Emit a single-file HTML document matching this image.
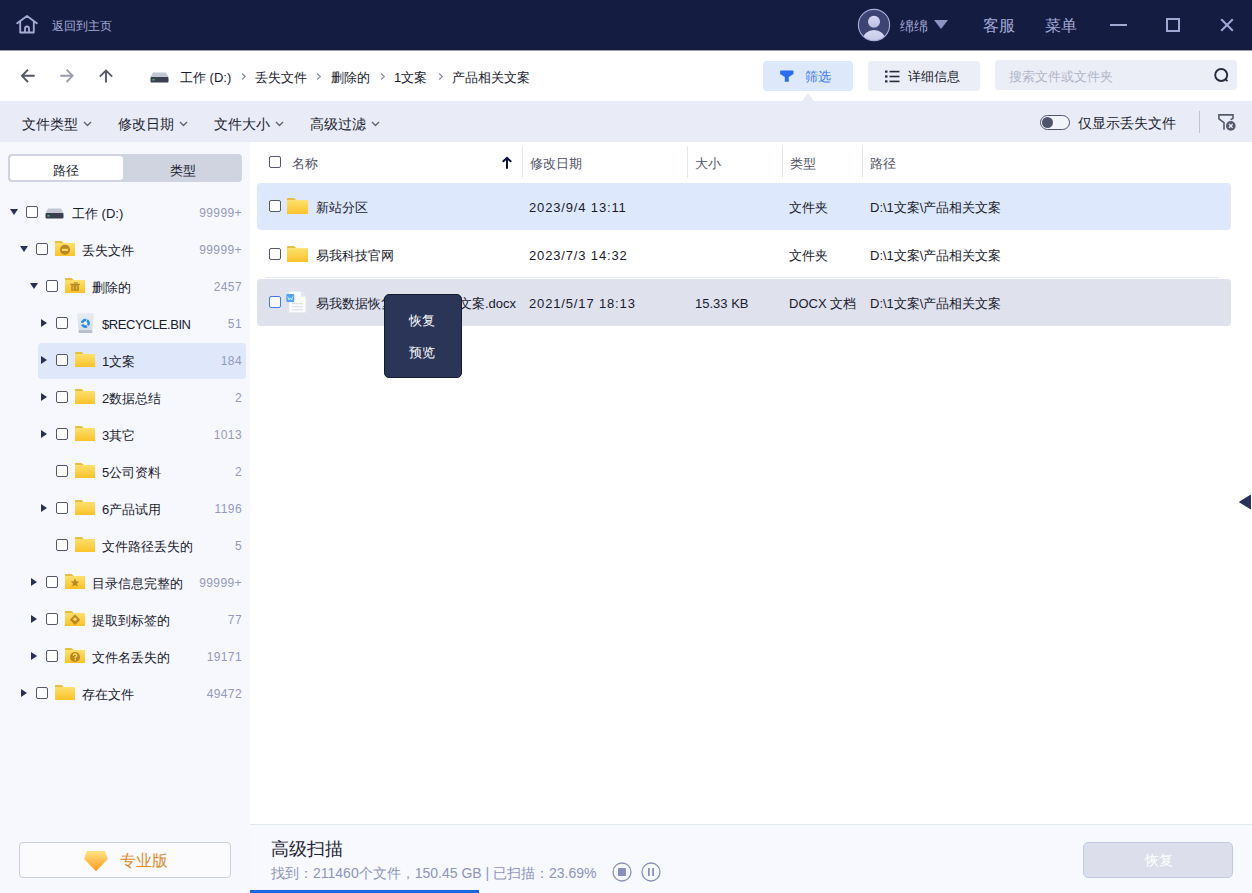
<!DOCTYPE html>
<html><head><meta charset="utf-8">
<style>
*{margin:0;padding:0;box-sizing:border-box}
html,body{width:1252px;height:893px;overflow:hidden;background:#fff;font-family:"Liberation Sans",sans-serif;color:#191b2e}
.a{position:absolute}
.t{position:absolute;white-space:nowrap;line-height:1;margin-top:2px}
#hdr{left:0;top:0;width:1252px;height:50px;background:#151c42}
#tb{left:0;top:50px;width:1252px;height:51px;background:#fff}
#fb{left:0;top:101px;width:1252px;height:41px;background:#e9ecf6}
#sb{left:0;top:142px;width:250px;height:751px;background:#f7f8fd}
#main{left:250px;top:142px;width:1002px;height:682px;background:#fff}
#status{left:250px;top:824px;width:1002px;height:69px;background:#f7f9fe;border-top:1px solid #e3eaee}
.cb{position:absolute;width:12px;height:12px;border:1.3px solid #55596a;border-radius:2px;background:#fff}
.tri{position:absolute;width:0;height:0;border-left:4.5px solid transparent;border-right:4.5px solid transparent;border-top:6px solid #283057}
.trir{position:absolute;width:0;height:0;border-top:4.5px solid transparent;border-bottom:4.5px solid transparent;border-left:6px solid #283057}
.cnt{position:absolute;right:8px;font-size:12px;color:#9499bd;line-height:1;white-space:nowrap;letter-spacing:0.4px;margin-top:1px}
.tx{position:absolute;font-size:13px;color:#191b2e;line-height:1;white-space:nowrap;margin-top:2px}
.ln{letter-spacing:0.85px}
</style></head><body>

<!-- HEADER -->
<div id="hdr" class="a">
  <svg class="a" style="left:16px;top:15px" width="22" height="19" viewBox="0 0 22 19"><path d="M1.2 8.3 L11 1 L20.8 8.3 M4.2 6.5 V17.5 H17.8 V6.5 M9 17.5 V13.5 A2 2 0 0 1 13 13.5 V17.5" fill="none" stroke="#a7acd6" stroke-width="1.8" stroke-linejoin="round" stroke-linecap="round"/></svg>
  <div class="t" style="left:52px;top:18px;font-size:12px;color:#a7acd6">返回到主页</div>
  <svg class="a" style="left:857px;top:8px" width="34" height="34" viewBox="0 0 34 34"><defs><clipPath id="avc"><circle cx="17" cy="17" r="15.6"/></clipPath><linearGradient id="avg" x1="0" y1="0" x2="0" y2="1"><stop offset="0" stop-color="#d6d9f2"/><stop offset="1" stop-color="#b9bde3"/></linearGradient></defs><circle cx="17" cy="17" r="15.6" fill="#3e4471"/><g clip-path="url(#avc)"><circle cx="17" cy="13.8" r="6" fill="url(#avg)"/><ellipse cx="17" cy="31.5" rx="11" ry="9.5" fill="url(#avg)"/></g><circle cx="17" cy="17" r="15.6" fill="none" stroke="#a9aedc" stroke-width="1.1"/></svg>
  <div class="t" style="left:900px;top:17px;font-size:14px;color:#a7acd6">绵绵</div>
  <div class="a" style="left:934px;top:20px;width:0;height:0;border-left:7px solid transparent;border-right:7px solid transparent;border-top:9.5px solid #8e93c2"></div>
  <div class="t" style="left:983px;top:16px;font-size:16px;color:#a2a8d4">客服</div>
  <div class="t" style="left:1045px;top:16px;font-size:16px;color:#a2a8d4">菜单</div>
  <div class="a" style="left:1110px;top:24px;width:17px;height:2px;background:#a2a8d4"></div>
  <div class="a" style="left:1166px;top:18px;width:14px;height:14px;border:2px solid #a2a8d4"></div>
  <svg class="a" style="left:1219px;top:17px" width="16" height="16" viewBox="0 0 16 16"><path d="M2.2 2.2 L13.8 13.8 M13.8 2.2 L2.2 13.8" stroke="#a2a8d4" stroke-width="2"/></svg>
</div>

<div class="a" style="left:0;top:50px;width:1252px;height:1px;background:#9a9db0;z-index:2"></div>
<!-- TOOLBAR -->
<div id="tb" class="a">
  <svg class="a" style="left:20px;top:18px" width="16" height="16" viewBox="0 0 16 16"><path d="M14.7 7.8 H2 M8 1.6 L2 7.8 L8 14" fill="none" stroke="#545869" stroke-width="1.9"/></svg>
  <svg class="a" style="left:59px;top:18px" width="16" height="16" viewBox="0 0 16 16"><path d="M1.3 7.8 H13.6 M7.6 1.6 L13.6 7.8 L7.6 14" fill="none" stroke="#9a9cab" stroke-width="1.9"/></svg>
  <svg class="a" style="left:98px;top:19px" width="16" height="15" viewBox="0 0 16 15"><path d="M8 13.5 V2 M1.8 7.6 L8 1.6 L14.2 7.6" fill="none" stroke="#545869" stroke-width="1.9"/></svg>
  <svg class="a" style="left:150px;top:22px" width="19" height="11" viewBox="0 0 19 11"><path d="M3 0.5 H16 L18.5 5 H0.5Z" fill="#c3c7d3"/><rect x="0.5" y="5" width="18" height="5.5" rx="1" fill="#3b3f50"/><rect x="2.5" y="7" width="2" height="1.5" fill="#40c060"/></svg>
  <div class="tx" style="left:180px;top:19px;font-size:13px">工作 (D:)</div>
  <svg class="a" style="left:241px;top:22px" width="6" height="9" viewBox="0 0 6 9"><path d="M1.2 1.5 L4.3 4.5 L1.2 7.5" fill="none" stroke="#8f93a0" stroke-width="1.2"/></svg>
  <div class="tx" style="left:255px;top:19px;font-size:13px">丢失文件</div>
  <svg class="a" style="left:316px;top:22px" width="6" height="9" viewBox="0 0 6 9"><path d="M1.2 1.5 L4.3 4.5 L1.2 7.5" fill="none" stroke="#8f93a0" stroke-width="1.2"/></svg>
  <div class="tx" style="left:331px;top:19px;font-size:13px">删除的</div>
  <svg class="a" style="left:380px;top:22px" width="6" height="9" viewBox="0 0 6 9"><path d="M1.2 1.5 L4.3 4.5 L1.2 7.5" fill="none" stroke="#8f93a0" stroke-width="1.2"/></svg>
  <div class="tx" style="left:394px;top:19px;font-size:13px">1文案</div>
  <svg class="a" style="left:438px;top:22px" width="6" height="9" viewBox="0 0 6 9"><path d="M1.2 1.5 L4.3 4.5 L1.2 7.5" fill="none" stroke="#8f93a0" stroke-width="1.2"/></svg>
  <div class="tx" style="left:452px;top:19px;font-size:13px">产品相关文案</div>

  <div class="a" style="left:763px;top:11px;width:90px;height:30px;background:#dde8fb;border-radius:4px"></div>
  <div class="a" style="left:802px;top:43px;width:0;height:0;border-left:6.5px solid transparent;border-right:6.5px solid transparent;border-bottom:8px solid #e9ecf6"></div>
  <svg class="a" style="left:780px;top:20px" width="14" height="13" viewBox="0 0 14 13"><path d="M0.8 0.5 H12.8 Q13.5 0.5 13.5 1.2 V4 L8.8 7 V11.8 H4.8 V7 L0.1 4 V1.2 Q0.1 0.5 0.8 0.5Z" fill="#2a6cf0"/></svg>
  <div class="tx" style="left:805px;top:18px;font-size:13px;color:#3a78f0">筛选</div>

  <div class="a" style="left:868px;top:11px;width:112px;height:30px;background:#eceef7;border-radius:4px"></div>
  <svg class="a" style="left:885px;top:20px" width="15" height="13" viewBox="0 0 15 13"><rect x="0" y="0.5" width="2.5" height="2.2" fill="#262a3c"/><rect x="4.5" y="0.8" width="10" height="1.6" fill="#262a3c"/><rect x="0" y="5.4" width="2.5" height="2.2" fill="#262a3c"/><rect x="4.5" y="5.7" width="10" height="1.6" fill="#262a3c"/><rect x="0" y="10.3" width="2.5" height="2.2" fill="#262a3c"/><rect x="4.5" y="10.6" width="10" height="1.6" fill="#262a3c"/></svg>
  <div class="tx" style="left:908px;top:18px;font-size:13px">详细信息</div>

  <div class="a" style="left:995px;top:10px;width:242px;height:30px;background:#eceef7;border-radius:4px"></div>
  <div class="tx" style="left:1009px;top:18px;font-size:13px;color:#b1b5c9">搜索文件或文件夹</div>
  <svg class="a" style="left:1213px;top:17px" width="17" height="17" viewBox="0 0 17 17"><circle cx="8.2" cy="8" r="6" fill="none" stroke="#262a3c" stroke-width="1.9"/><path d="M12.4 12.2 L14.4 14.2" stroke="#262a3c" stroke-width="1.9"/></svg>
</div>

<!-- FILTER BAR -->
<div id="fb" class="a">
  <div class="tx" style="left:22px;top:14px;font-size:14px">文件类型</div>
  <svg class="a" style="left:83px;top:20px" width="9" height="6" viewBox="0 0 9 6"><path d="M1 1 L4.5 4.5 L8 1" fill="none" stroke="#5a5e70" stroke-width="1.3"/></svg>
  <div class="tx" style="left:118px;top:14px;font-size:14px">修改日期</div>
  <svg class="a" style="left:179px;top:20px" width="9" height="6" viewBox="0 0 9 6"><path d="M1 1 L4.5 4.5 L8 1" fill="none" stroke="#5a5e70" stroke-width="1.3"/></svg>
  <div class="tx" style="left:214px;top:14px;font-size:14px">文件大小</div>
  <svg class="a" style="left:275px;top:20px" width="9" height="6" viewBox="0 0 9 6"><path d="M1 1 L4.5 4.5 L8 1" fill="none" stroke="#5a5e70" stroke-width="1.3"/></svg>
  <div class="tx" style="left:310px;top:14px;font-size:14px">高级过滤</div>
  <svg class="a" style="left:371px;top:20px" width="9" height="6" viewBox="0 0 9 6"><path d="M1 1 L4.5 4.5 L8 1" fill="none" stroke="#5a5e70" stroke-width="1.3"/></svg>
  <div class="a" style="left:1040px;top:14px;width:30px;height:15px;border:1.3px solid #50546a;border-radius:8px;background:#f3f4fa"></div>
  <div class="a" style="left:1042px;top:16px;width:11px;height:11px;border-radius:50%;background:#50546a"></div>
  <div class="tx" style="left:1078px;top:12.5px;font-size:14px">仅显示丢失文件</div>
  <div class="a" style="left:1199px;top:10px;width:1px;height:22px;background:#bfc2cf"></div>
  <svg class="a" style="left:1210px;top:7px" width="32" height="28" viewBox="0 0 32 28"><path d="M14 21.8 V14.6 L8.9 10.8 V6.9 H23 V10.4 L20.6 11.8" fill="none" stroke="#55596b" stroke-width="1.6"/><circle cx="20.8" cy="17.9" r="5.4" fill="#e9ecf6"/><circle cx="20.8" cy="17.9" r="4.8" fill="#55596b"/><path d="M19 16.1 L22.6 19.7 M22.6 16.1 L19 19.7" stroke="#e9ecf6" stroke-width="1.4"/></svg>
</div>

<!-- SIDEBAR -->
<div id="sb" class="a">
  <div class="a" style="left:8px;top:12px;width:234px;height:28px;background:#d0d4e0;border-radius:4px"></div>
  <div class="a" style="left:10px;top:14px;width:113px;height:24px;background:#fff;border-radius:3px"></div>
  <div class="tx" style="left:53px;top:19.5px;font-size:13.3px">路径</div>
  <div class="tx" style="left:170px;top:19.5px;font-size:13.3px">类型</div>
  <div class="a" style="left:38px;top:201px;width:208px;height:36px;background:#dfe8fb;border-radius:4px"></div>
  <div class="tri" style="left:10px;top:67px"></div>
  <div class="cb" style="left:26px;top:64px"></div>
  <svg class="a" style="left:45px;top:66px" width="19" height="11" viewBox="0 0 19 11"><path d="M3 0.5 H16 L18.5 5 H0.5Z" fill="#c3c7d3"/><rect x="0.5" y="5" width="18" height="5.5" rx="1" fill="#3b3f50"/><rect x="2.5" y="7" width="2" height="1.5" fill="#40c060"/></svg>
  <div class="tx" style="left:72px;top:63px">工作 (D:)</div>
  <div class="cnt" style="top:64px">99999+</div>
  <div class="tri" style="left:20px;top:104px"></div>
  <div class="cb" style="left:36px;top:101px"></div>
  <svg class="a" style="left:55px;top:99px" width="20" height="15" viewBox="0 0 20 15" preserveAspectRatio="none"><defs><linearGradient id="fg1" x1="0" y1="0" x2="0" y2="1"><stop offset="0" stop-color="#fde06c"/><stop offset="1" stop-color="#fbc22a"/></linearGradient></defs><path d="M0 2.2 V0.8 Q0 0 0.8 0 H6.3 Q6.8 0 7.2 0.4 L9 2.2Z" fill="#e6bf3e"/><rect x="0" y="2" width="20" height="13" fill="url(#fg1)"/><circle cx="10" cy="8.8" r="5" fill="#b98724"/><rect x="7" y="7.8" width="6" height="2.1" fill="#fddc62"/></svg>
  <div class="tx" style="left:82px;top:100px">丢失文件</div>
  <div class="cnt" style="top:101px">99999+</div>
  <div class="tri" style="left:30px;top:141px"></div>
  <div class="cb" style="left:46px;top:138px"></div>
  <svg class="a" style="left:65px;top:136px" width="20" height="15" viewBox="0 0 20 15" preserveAspectRatio="none"><defs><linearGradient id="fg2" x1="0" y1="0" x2="0" y2="1"><stop offset="0" stop-color="#fde06c"/><stop offset="1" stop-color="#fbc22a"/></linearGradient></defs><path d="M0 2.2 V0.8 Q0 0 0.8 0 H6.3 Q6.8 0 7.2 0.4 L9 2.2Z" fill="#e6bf3e"/><rect x="0" y="2" width="20" height="13" fill="url(#fg2)"/><rect x="5.2" y="5.8" width="9.7" height="1.3" fill="#b98724"/><rect x="8.9" y="4.4" width="3.7" height="1.2" fill="#b98724"/><path d="M6.2 7.3 H13.9 V12.8 H6.2Z M7.8 8.6 V11.4 H8.9 V8.6Z M11.2 8.6 V11.4 H12.3 V8.6Z" fill="#b98724" fill-rule="evenodd"/></svg>
  <div class="tx" style="left:92px;top:137px">删除的</div>
  <div class="cnt" style="top:138px">2457</div>
  <div class="trir" style="left:41px;top:177px"></div>
  <div class="cb" style="left:56px;top:175px"></div>
  <svg class="a" style="left:77px;top:171px" width="17" height="20" viewBox="0 0 17 20"><defs><linearGradient id="rb" x1="0" y1="0" x2="0" y2="1"><stop offset="0" stop-color="#e8edf4"/><stop offset="1" stop-color="#d3d9e3"/></linearGradient></defs><path d="M0.2 1.6 Q0.2 0 1.8 0 H15.2 Q16.8 0 16.8 1.6 L15.1 20 H1.9Z" fill="url(#rb)"/><path d="M1.65 17.2 H15.35 L15.1 20 H1.9Z" fill="#b6bdc9"/><circle cx="8.4" cy="10.3" r="3.3" fill="none" stroke="#2b8aeb" stroke-width="2.5" stroke-dasharray="5.4 1.5" transform="rotate(-60 8.4 10.3)"/><path d="M8.4 8.3 L9.2 9.8 L10.4 10.3 L9.2 10.8 L8.4 12.3 L7.6 10.8 L6.4 10.3 L7.6 9.8Z" fill="#f3f6fb"/></svg>
  <div class="tx" style="left:102px;top:174px;letter-spacing:-0.45px">$RECYCLE.BIN</div>
  <div class="cnt" style="top:175px">51</div>
  <div class="trir" style="left:41px;top:214px"></div>
  <div class="cb" style="left:56px;top:212px"></div>
  <svg class="a" style="left:75px;top:210px" width="20" height="15" viewBox="0 0 20 15" preserveAspectRatio="none"><defs><linearGradient id="fg4" x1="0" y1="0" x2="0" y2="1"><stop offset="0" stop-color="#fde06c"/><stop offset="1" stop-color="#fbc22a"/></linearGradient></defs><path d="M0 2.2 V0.8 Q0 0 0.8 0 H6.3 Q6.8 0 7.2 0.4 L9 2.2Z" fill="#e6bf3e"/><rect x="0" y="2" width="20" height="13" fill="url(#fg4)"/></svg>
  <div class="tx" style="left:102px;top:211px">1文案</div>
  <div class="cnt" style="top:212px">184</div>
  <div class="trir" style="left:41px;top:251px"></div>
  <div class="cb" style="left:56px;top:249px"></div>
  <svg class="a" style="left:75px;top:247px" width="20" height="15" viewBox="0 0 20 15" preserveAspectRatio="none"><defs><linearGradient id="fg5" x1="0" y1="0" x2="0" y2="1"><stop offset="0" stop-color="#fde06c"/><stop offset="1" stop-color="#fbc22a"/></linearGradient></defs><path d="M0 2.2 V0.8 Q0 0 0.8 0 H6.3 Q6.8 0 7.2 0.4 L9 2.2Z" fill="#e6bf3e"/><rect x="0" y="2" width="20" height="13" fill="url(#fg5)"/></svg>
  <div class="tx" style="left:102px;top:248px">2数据总结</div>
  <div class="cnt" style="top:249px">2</div>
  <div class="trir" style="left:41px;top:288px"></div>
  <div class="cb" style="left:56px;top:286px"></div>
  <svg class="a" style="left:75px;top:284px" width="20" height="15" viewBox="0 0 20 15" preserveAspectRatio="none"><defs><linearGradient id="fg6" x1="0" y1="0" x2="0" y2="1"><stop offset="0" stop-color="#fde06c"/><stop offset="1" stop-color="#fbc22a"/></linearGradient></defs><path d="M0 2.2 V0.8 Q0 0 0.8 0 H6.3 Q6.8 0 7.2 0.4 L9 2.2Z" fill="#e6bf3e"/><rect x="0" y="2" width="20" height="13" fill="url(#fg6)"/></svg>
  <div class="tx" style="left:102px;top:285px">3其它</div>
  <div class="cnt" style="top:286px">1013</div>
  <div class="cb" style="left:56px;top:323px"></div>
  <svg class="a" style="left:75px;top:321px" width="20" height="15" viewBox="0 0 20 15" preserveAspectRatio="none"><defs><linearGradient id="fg7" x1="0" y1="0" x2="0" y2="1"><stop offset="0" stop-color="#fde06c"/><stop offset="1" stop-color="#fbc22a"/></linearGradient></defs><path d="M0 2.2 V0.8 Q0 0 0.8 0 H6.3 Q6.8 0 7.2 0.4 L9 2.2Z" fill="#e6bf3e"/><rect x="0" y="2" width="20" height="13" fill="url(#fg7)"/></svg>
  <div class="tx" style="left:102px;top:322px">5公司资料</div>
  <div class="cnt" style="top:323px">2</div>
  <div class="trir" style="left:41px;top:362px"></div>
  <div class="cb" style="left:56px;top:360px"></div>
  <svg class="a" style="left:75px;top:358px" width="20" height="15" viewBox="0 0 20 15" preserveAspectRatio="none"><defs><linearGradient id="fg8" x1="0" y1="0" x2="0" y2="1"><stop offset="0" stop-color="#fde06c"/><stop offset="1" stop-color="#fbc22a"/></linearGradient></defs><path d="M0 2.2 V0.8 Q0 0 0.8 0 H6.3 Q6.8 0 7.2 0.4 L9 2.2Z" fill="#e6bf3e"/><rect x="0" y="2" width="20" height="13" fill="url(#fg8)"/></svg>
  <div class="tx" style="left:102px;top:359px">6产品试用</div>
  <div class="cnt" style="top:360px">1196</div>
  <div class="cb" style="left:56px;top:397px"></div>
  <svg class="a" style="left:75px;top:395px" width="20" height="15" viewBox="0 0 20 15" preserveAspectRatio="none"><defs><linearGradient id="fg9" x1="0" y1="0" x2="0" y2="1"><stop offset="0" stop-color="#fde06c"/><stop offset="1" stop-color="#fbc22a"/></linearGradient></defs><path d="M0 2.2 V0.8 Q0 0 0.8 0 H6.3 Q6.8 0 7.2 0.4 L9 2.2Z" fill="#e6bf3e"/><rect x="0" y="2" width="20" height="13" fill="url(#fg9)"/></svg>
  <div class="tx" style="left:102px;top:396px">文件路径丢失的</div>
  <div class="cnt" style="top:397px">5</div>
  <div class="trir" style="left:31px;top:436px"></div>
  <div class="cb" style="left:46px;top:434px"></div>
  <svg class="a" style="left:65px;top:432px" width="20" height="15" viewBox="0 0 20 15" preserveAspectRatio="none"><defs><linearGradient id="fg10" x1="0" y1="0" x2="0" y2="1"><stop offset="0" stop-color="#fde06c"/><stop offset="1" stop-color="#fbc22a"/></linearGradient></defs><path d="M0 2.2 V0.8 Q0 0 0.8 0 H6.3 Q6.8 0 7.2 0.4 L9 2.2Z" fill="#e6bf3e"/><rect x="0" y="2" width="20" height="13" fill="url(#fg10)"/><path d="M10 4.3 L11.2 7.3 L14.3 7.5 L11.9 9.5 L12.7 12.6 L10 10.9 L7.3 12.6 L8.1 9.5 L5.7 7.5 L8.8 7.3Z" fill="#b98724"/></svg>
  <div class="tx" style="left:92px;top:433px">目录信息完整的</div>
  <div class="cnt" style="top:434px">99999+</div>
  <div class="trir" style="left:31px;top:473px"></div>
  <div class="cb" style="left:46px;top:471px"></div>
  <svg class="a" style="left:65px;top:469px" width="20" height="15" viewBox="0 0 20 15" preserveAspectRatio="none"><defs><linearGradient id="fg11" x1="0" y1="0" x2="0" y2="1"><stop offset="0" stop-color="#fde06c"/><stop offset="1" stop-color="#fbc22a"/></linearGradient></defs><path d="M0 2.2 V0.8 Q0 0 0.8 0 H6.3 Q6.8 0 7.2 0.4 L9 2.2Z" fill="#e6bf3e"/><rect x="0" y="2" width="20" height="13" fill="url(#fg11)"/><path d="M10 3.6 L15.2 8.8 L10 14 L4.8 8.8Z" fill="#b98724"/><circle cx="10" cy="8.2" r="1.7" fill="#fddc62"/></svg>
  <div class="tx" style="left:92px;top:470px">提取到标签的</div>
  <div class="cnt" style="top:471px">77</div>
  <div class="trir" style="left:31px;top:510px"></div>
  <div class="cb" style="left:46px;top:508px"></div>
  <svg class="a" style="left:65px;top:506px" width="20" height="15" viewBox="0 0 20 15" preserveAspectRatio="none"><defs><linearGradient id="fg12" x1="0" y1="0" x2="0" y2="1"><stop offset="0" stop-color="#fde06c"/><stop offset="1" stop-color="#fbc22a"/></linearGradient></defs><path d="M0 2.2 V0.8 Q0 0 0.8 0 H6.3 Q6.8 0 7.2 0.4 L9 2.2Z" fill="#e6bf3e"/><rect x="0" y="2" width="20" height="13" fill="url(#fg12)"/><circle cx="10" cy="9" r="5.1" fill="#b98724"/><path d="M8.3 7.8 Q8.3 6 10 6 Q11.8 6 11.8 7.6 Q11.8 8.6 10.3 9.2 V10.4" fill="none" stroke="#fddc62" stroke-width="1.3"/><circle cx="10.3" cy="11.9" r="0.8" fill="#fddc62"/></svg>
  <div class="tx" style="left:92px;top:507px">文件名丢失的</div>
  <div class="cnt" style="top:508px">19171</div>
  <div class="trir" style="left:21px;top:547px"></div>
  <div class="cb" style="left:36px;top:545px"></div>
  <svg class="a" style="left:55px;top:543px" width="20" height="15" viewBox="0 0 20 15" preserveAspectRatio="none"><defs><linearGradient id="fg13" x1="0" y1="0" x2="0" y2="1"><stop offset="0" stop-color="#fde06c"/><stop offset="1" stop-color="#fbc22a"/></linearGradient></defs><path d="M0 2.2 V0.8 Q0 0 0.8 0 H6.3 Q6.8 0 7.2 0.4 L9 2.2Z" fill="#e6bf3e"/><rect x="0" y="2" width="20" height="13" fill="url(#fg13)"/></svg>
  <div class="tx" style="left:82px;top:544px">存在文件</div>
  <div class="cnt" style="top:545px">49472</div>
  <div class="a" style="left:19px;top:700px;width:212px;height:36px;border:1px solid #cfd1d8;border-radius:4px;background:#fbfbfd"></div>
  <svg class="a" style="left:84px;top:709px" width="24" height="21" viewBox="0 0 24 21"><defs><linearGradient id="dia" x1="0" y1="0" x2="0" y2="1"><stop offset="0" stop-color="#ffe383"/><stop offset="1" stop-color="#ff981e"/></linearGradient></defs><path d="M2.7 0 H20.9 L23.9 8 L12 20.2 L0.1 8Z" fill="url(#dia)"/></svg>
  <div class="tx" style="left:120px;top:708.5px;font-size:16px;color:#de8a2e">专业版</div>
</div>

<!-- MAIN -->
<div id="main" class="a">
  <div class="cb" style="left:19px;top:14px"></div>
  <div class="tx" style="left:42px;top:13px;color:#4f5366">名称</div>
  <svg class="a" style="left:252px;top:14px" width="10" height="13" viewBox="0 0 10 13"><path d="M5 12 V2.2 M1.4 5.3 L5 1.8 L8.6 5.3" fill="none" stroke="#0d1038" stroke-width="2" stroke-linecap="round"/></svg>
  <div class="a" style="left:272px;top:4px;width:1px;height:32px;background:#dde9ea"></div>
  <div class="tx" style="left:280px;top:13px;color:#4f5366">修改日期</div>
  <div class="a" style="left:437px;top:4px;width:1px;height:32px;background:#dde9ea"></div>
  <div class="tx" style="left:445px;top:13px;color:#4f5366">大小</div>
  <div class="a" style="left:532px;top:4px;width:1px;height:32px;background:#dde9ea"></div>
  <div class="tx" style="left:540px;top:13px;color:#4f5366">类型</div>
  <div class="a" style="left:612px;top:4px;width:1px;height:32px;background:#dde9ea"></div>
  <div class="tx" style="left:620px;top:13px;color:#4f5366">路径</div>
  <div class="a" style="left:7px;top:41px;width:974px;height:47px;background:#dee8fc;border-radius:4px"></div>
  <div class="a" style="left:15px;top:135px;width:953px;height:1px;background:#e3e7f2"></div>
  <div class="a" style="left:7px;top:137px;width:974px;height:47px;background:#dfe1ed;border-radius:4px"></div>
  <div class="cb" style="left:19px;top:58px;"></div>
  <svg class="a" style="left:37px;top:56px" width="21" height="16" viewBox="0 0 20 15" preserveAspectRatio="none"><defs><linearGradient id="fgm0" x1="0" y1="0" x2="0" y2="1"><stop offset="0" stop-color="#fde06c"/><stop offset="1" stop-color="#fbc22a"/></linearGradient></defs><path d="M0 2.2 V0.8 Q0 0 0.8 0 H6.3 Q6.8 0 7.2 0.4 L9 2.2Z" fill="#e6bf3e"/><rect x="0" y="2" width="20" height="13" fill="url(#fgm0)"/></svg>
  <div class="tx" style="left:66px;top:57px">新站分区</div>
  <div class="tx ln" style="left:279px;top:57px">2023/9/4 13:11</div>
  <div class="tx" style="left:539px;top:57px">文件夹</div>
  <div class="tx" style="left:620px;top:57px">D:\1文案\产品相关文案</div>
  <div class="cb" style="left:19px;top:106px;"></div>
  <svg class="a" style="left:37px;top:104px" width="21" height="16" viewBox="0 0 20 15" preserveAspectRatio="none"><defs><linearGradient id="fgm1" x1="0" y1="0" x2="0" y2="1"><stop offset="0" stop-color="#fde06c"/><stop offset="1" stop-color="#fbc22a"/></linearGradient></defs><path d="M0 2.2 V0.8 Q0 0 0.8 0 H6.3 Q6.8 0 7.2 0.4 L9 2.2Z" fill="#e6bf3e"/><rect x="0" y="2" width="20" height="13" fill="url(#fgm1)"/></svg>
  <div class="tx" style="left:66px;top:105px">易我科技官网</div>
  <div class="tx ln" style="left:279px;top:105px">2023/7/3 14:32</div>
  <div class="tx" style="left:539px;top:105px">文件夹</div>
  <div class="tx" style="left:620px;top:105px">D:\1文案\产品相关文案</div>
  <div class="cb" style="left:19px;top:154px;border-color:#3d7ce9"></div>
  <svg class="a" style="left:36px;top:149px" width="21" height="22" viewBox="0 0 21 22"><path d="M3 0.5 H15 L20 5.5 V21 Q20 21.5 19.5 21.5 H3.5 Q3 21.5 3 21Z" fill="#fafbfc" stroke="#e6e8ee" stroke-width="0.8"/><path d="M15 0.5 V5.5 H20" fill="#e3e6ec"/><rect x="6" y="12" width="11" height="1.3" fill="#dfe2e8"/><rect x="6" y="15" width="11" height="1.3" fill="#dfe2e8"/><rect x="6" y="18" width="11" height="1.3" fill="#dfe2e8"/><rect x="0.3" y="3" width="7.9" height="7.9" rx="0.9" fill="#55a5f3"/><path d="M1.8 5.5 L2.9 9 L4.25 7 L5.6 9 L6.7 5.5" fill="none" stroke="#e6f1fd" stroke-width="0.8"/></svg>
  <div class="tx" style="left:66px;top:153px">易我数据恢复软件的产品文案.docx</div>
  <div class="tx ln" style="left:279px;top:153px">2021/5/17 18:13</div>
  <div class="tx" style="left:445px;top:153px">15.33 KB</div>
  <div class="tx" style="left:539px;top:153px">DOCX 文档</div>
  <div class="tx" style="left:620px;top:153px">D:\1文案\产品相关文案</div>
  <div class="a" style="left:134px;top:152px;width:78px;height:84px;background:#2b3558;border:1px solid #161b2c;border-radius:5px"></div>
  <div class="tx" style="left:159px;top:169.5px;color:#fff">恢复</div>
  <div class="tx" style="left:159px;top:201.5px;color:#fff">预览</div>
  <svg class="a" style="left:988px;top:352px" width="14" height="16" viewBox="0 0 14 16"><path d="M13 1.5 V14.5 Q13 15.5 12 15 L1.5 8.6 Q0.8 8 1.5 7.4 L12 1 Q13 0.5 13 1.5Z" fill="#283159"/></svg>
</div>

<!-- STATUS -->
<div id="status" class="a">
  <div class="tx" style="left:21px;top:13px;font-size:18px;color:#1f2233">高级扫描</div>
  <div class="tx" style="left:21px;top:38.5px;font-size:14px;color:#8f94bd">找到：211460个文件，150.45 GB | 已扫描：23.69%</div>
  <svg class="a" style="left:362px;top:37px" width="20" height="20" viewBox="0 0 20 20"><circle cx="10" cy="10" r="9" fill="none" stroke="#8a90bb" stroke-width="1.3"/><rect x="6" y="6" width="8" height="8" rx="0.8" fill="#8a90bb"/></svg>
  <svg class="a" style="left:391px;top:37px" width="20" height="20" viewBox="0 0 20 20"><circle cx="10" cy="10" r="9" fill="none" stroke="#8a90bb" stroke-width="1.3"/><rect x="7" y="6" width="1.8" height="8" fill="#8a90bb"/><rect x="11.2" y="6" width="1.8" height="8" fill="#8a90bb"/></svg>
  <div class="a" style="left:0;top:65px;width:229px;height:4px;background:#1a66e0"></div>
  <div class="a" style="left:833px;top:17px;width:150px;height:36px;background:#dcdfeb;border:1px solid #c3cbe0;border-radius:5px"></div>
  <div class="tx" style="left:895px;top:26px;font-size:14px;color:#fff">恢复</div>
</div>

</body></html>
